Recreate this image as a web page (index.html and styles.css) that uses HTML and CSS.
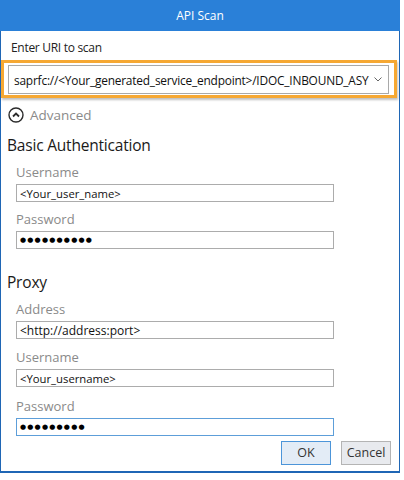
FILE: index.html
```html
<!DOCTYPE html>
<html>
<head>
<meta charset="utf-8">
<link rel="stylesheet" href="styles.css">
</head>
<body>
<div class="window">
  <div class="titlebar">API Scan</div>
  <div class="body">
    <div class="uri-label">Enter URI to scan</div>
    <div class="highlight">
      <div class="combo">
        <span class="combo-text">saprfc://&lt;Your_generated_service_endpoint&gt;/IDOC_INBOUND_ASY</span>
        <svg class="combo-arrow" width="8" height="5" viewBox="0 0 8 5"><path d="M0.5 0.5 L4 4 L7.5 0.5" fill="none" stroke="#666" stroke-width="1"/></svg>
      </div>
    </div>
    <div class="advanced">
      <svg class="adv-icon" width="16" height="16" viewBox="0 0 16 16"><circle cx="8" cy="8" r="7" fill="none" stroke="#2b2b2b" stroke-width="1.4"/><path d="M5 9.5 L8 6.5 L11 9.5" fill="none" stroke="#2b2b2b" stroke-width="1.8"/></svg>
      <span>Advanced</span>
    </div>
    <div class="section-title first">Basic Authentication</div>
    <div class="fields">
      <div class="label l1">Username</div>
      <div class="input"><span class="val">&lt;Your_user_name&gt;</span></div>
      <div class="label l2">Password</div>
      <div class="input"><span class="dots">●●●●●●●●●●</span></div>
    </div>
    <div class="section-title second">Proxy</div>
    <div class="fields">
      <div class="label l1">Address</div>
      <div class="input"><span class="val big">&lt;http://address:port&gt;</span></div>
      <div class="label l3">Username</div>
      <div class="input"><span class="val">&lt;Your_username&gt;</span></div>
      <div class="label l4">Password</div>
      <div class="input focused"><span class="dots">●●●●●●●●●</span></div>
    </div>
    <div class="buttons">
      <div class="btn ok">OK</div>
      <div class="btn cancel">Cancel</div>
    </div>
  </div>
</div>
</body>
</html>
```
FILE: styles.css
```css
* { box-sizing: border-box; }
html, body { margin: 0; padding: 0; background: #fff; }
body { font-family: "Open Sans", "Noto Sans", sans-serif; color: #1e1e1e; }
.window { width: 400px; height: 473px; }
.titlebar {
  height: 31px; background: #2a80d8; color: #fff;
  font-size: 12px; line-height: 31px; text-align: center;
}
.body {
  height: 442px;
  border-left: 1px solid #1f66b5;
  border-right: 1px solid #1f66b5;
  border-bottom: 2px solid #1f66b5;
  padding-top: 9px;
}
.uri-label { font-size: 12px; letter-spacing: -0.3px; line-height: 16px; margin-left: 10px; color: #222; }
.highlight {
  margin-top: 4px; width: 396px; height: 38px;
  border: 3px solid #f6a833;
  padding: 2px 0 1px 4px;
  box-shadow: 1px 2px 2px rgba(0,0,0,0.25);
}
.combo {
  width: 381px; height: 29px; border: 1px solid #a9a9a9; background: #fff;
  display: flex; align-items: center; padding-left: 5px; gap: 4px;
}
.combo-text { font-size: 11.9px; letter-spacing: -0.2px; color: #111; white-space: nowrap; flex: 1; min-width: 0; }
.combo-arrow { margin-right: 6px; flex: none; }
.advanced {
  margin-top: 8px; height: 18px; display: flex; align-items: center;
  margin-left: 7px; gap: 6px; color: #8a8a8a; font-size: 13.5px;
}
.section-title { font-size: 15.5px; letter-spacing: -0.2px; line-height: 22px; margin-left: 6px; color: #1a1a1a; }
.section-title.first { margin-top: 10px; }
.section-title.second { margin-top: 22px; }
.fields { padding-left: 15px; }
.label { font-size: 13px; line-height: 16px; color: #8a8a8a; }
.l1 { margin-top: 8px; }
.l2 { margin-top: 9px; }
.l3 { margin-top: 10px; }
.l4 { margin-top: 11px; }
.input {
  width: 318px; height: 18px; border: 1px solid #acacac; margin-top: 4px;
  display: flex; align-items: center; padding-left: 3px;
}
.input.focused { border-color: #5d9ed9; }
.val { font-size: 11.3px; color: #111; white-space: nowrap; }
.val.big { font-size: 12px; }
.dots { font-family: "DejaVu Sans", sans-serif; font-size: 7px; letter-spacing: 1.2px; color: #000; line-height: 1; }
.buttons { display: flex; justify-content: flex-end; gap: 10px; margin-top: 5px; padding-right: 8px; }
.btn {
  width: 50px; height: 24px; font-size: 12.5px; line-height: 22px; text-align: center; color: #333;
}
.btn.ok { border: 1px solid #4c95d9; background: #e3ecf6; }
.btn.cancel { border: 1px solid #b4b4b4; background: #e8eaee; }
```
